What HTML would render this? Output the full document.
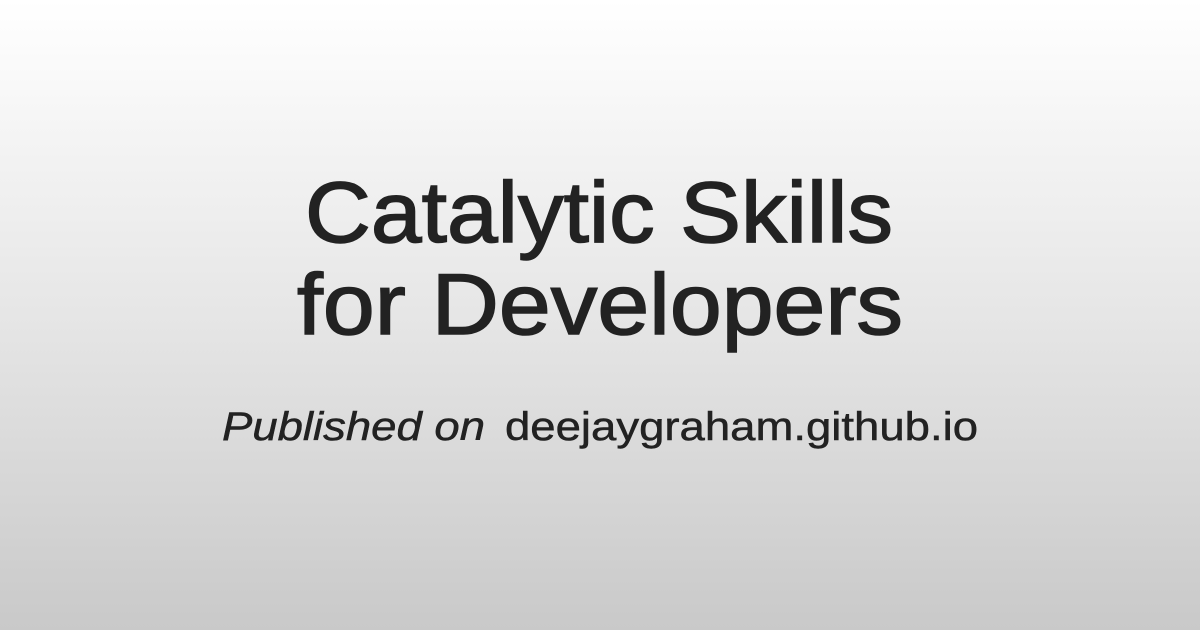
<!DOCTYPE html>
<html><head><meta charset="utf-8"><style>
html,body{margin:0;padding:0}
body{width:1200px;height:630px;overflow:hidden;background:linear-gradient(to bottom,#ffffff 0%,#e6e6e6 50%,#c9c9c9 100%)}
svg{position:absolute;left:0;top:0}
text{font-family:"Liberation Sans","DejaVu Sans",sans-serif;fill:#222}
</style></head><body>
<svg width="1200" height="630" viewBox="0 0 1200 630">
<text x="305" y="242" font-size="86" stroke="#222" stroke-width="1.5" textLength="588" lengthAdjust="spacingAndGlyphs">Catalytic Skills</text>
<text x="297" y="334" font-size="86" stroke="#222" stroke-width="1.5" textLength="606" lengthAdjust="spacingAndGlyphs">for Developers</text>
<text x="222" y="440" font-size="40" font-style="italic" stroke="#222" stroke-width="0.5" textLength="263" lengthAdjust="spacingAndGlyphs">Published on</text>
<text x="505" y="440" font-size="40" stroke="#222" stroke-width="0.5" textLength="473" lengthAdjust="spacingAndGlyphs">deejaygraham.github.io</text>
</svg>
</body></html>
